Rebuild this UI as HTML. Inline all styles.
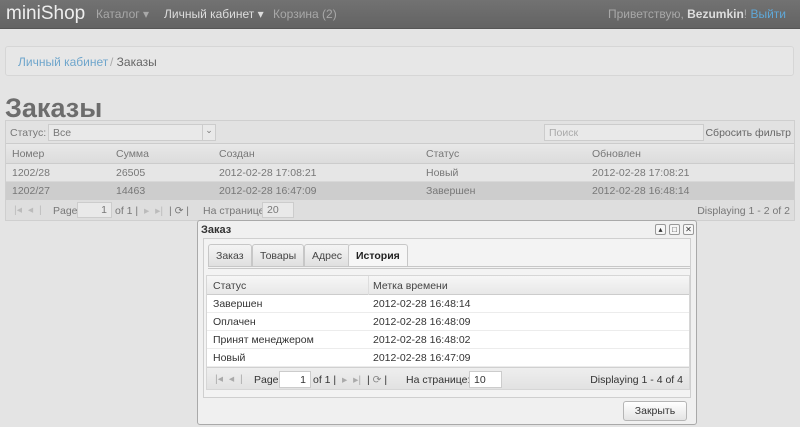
<!DOCTYPE html>
<html><head><meta charset="utf-8"><style>
*{box-sizing:border-box;margin:0;padding:0;white-space:nowrap}
body{width:800px;height:427px;overflow:hidden;background:#e4e4e4;font-family:"Liberation Sans",Arial,sans-serif;font-size:10.5px;color:#777;position:relative}
.a{position:absolute}
.nav{left:0;top:0;width:800px;height:29px;background:linear-gradient(#727272,#636363);border-bottom:1px solid #555}
.nav span{position:absolute;top:7px;font-size:12px;color:#a8a8a8}
.crumb{left:5px;top:46px;width:789px;height:30px;background:#e7e7e7;border:1px solid #d6d6d6;border-radius:3px}
.grid{left:5px;top:120px;width:790px;height:101px;border:1px solid #cfcfcf;background:#e2e2e2}
.hdr{background:linear-gradient(#e8e8e8,#dcdcdc);border-bottom:1px solid #ccc}
.cell{position:absolute;top:4px}
.pager{background:#dedede}
.inp{position:absolute;background:#e9e9e9;border:1px solid #ccc}
.win{left:197px;top:220px;width:500px;height:205px;background:#f0f0f0;border:1px solid #a9a9a9;border-radius:3px;color:#333}
.tab{position:absolute;top:23px;height:22px;border:1px solid #c7c7c7;border-bottom:none;border-radius:3px 3px 0 0;background:linear-gradient(#f4f4f4,#e0e0e0);padding:5px 7px;font-size:10.5px;color:#444}
.row{position:absolute;left:0;width:482px;height:18px;background:#fff;border-bottom:1px solid #ececec}
.row span{position:absolute;top:3px}
.btn{position:absolute;left:425px;top:180px;width:64px;height:20px;border:1px solid #b5b5b5;border-radius:3px;background:linear-gradient(#fff,#e4e4e4);text-align:center;padding-top:3px;font-size:10.5px}
.ib{position:absolute;top:3px;width:11px;height:11px;border:1px solid #999;border-radius:2px;background:#f6f6f6;font-size:8px;text-align:center;line-height:9px;color:#333}
</style></head><body>
<div class="a nav">
<span style="left:6px;top:3px;font-size:19px;color:#eee">miniShop</span>
<span style="left:96px">Каталог ▾</span>
<span style="left:164px;color:#ddd">Личный кабинет ▾</span>
<span style="left:273px">Корзина (2)</span>
<span style="right:14px">Приветствую, <b style="color:#ddd">Bezumkin</b>! <span style="position:static;color:#5fa8d8">Выйти</span></span>
</div>
<div class="a crumb"><span class="a" style="left:12px;top:8px;font-size:12px;color:#6fa6cc">Личный кабинет</span><span class="a" style="left:104px;top:8px;font-size:12px;color:#aaa">/ <span style="color:#666">Заказы</span></span></div>
<div class="a" style="left:5px;top:93px;font-size:27px;font-weight:bold;color:#6d6d6d">Заказы</div>
<div class="a grid">
 <div class="a" style="left:0;top:0;width:788px;height:23px;border-bottom:1px solid #ccc">
  <span class="a" style="left:4px;top:6px">Статус:</span>
  <div class="inp" style="left:42px;top:3px;width:168px;height:17px;padding:2px 4px">Все</div>
  <div class="inp" style="left:196px;top:3px;width:14px;height:17px;font-size:9px;text-align:center">⌄</div>
  <div class="inp" style="left:538px;top:3px;width:160px;height:17px;padding:2px 4px;color:#aaa">Поиск</div>
  <span class="a" style="right:3px;top:6px;color:#666">Сбросить фильтр</span>
 </div>
 <div class="a hdr" style="left:0;top:23px;width:788px;height:20px">
  <span class="cell" style="left:6px">Номер</span><span class="cell" style="left:110px">Сумма</span><span class="cell" style="left:213px">Создан</span><span class="cell" style="left:420px">Статус</span><span class="cell" style="left:586px">Обновлен</span>
 </div>
 <div class="a" style="left:0;top:43px;width:788px;height:18px;background:#e6e6e6;border-bottom:1px solid #d8d8d8">
  <span class="cell" style="left:6px;top:3px">1202/28</span><span class="cell" style="left:110px;top:3px">26505</span><span class="cell" style="left:213px;top:3px">2012-02-28 17:08:21</span><span class="cell" style="left:420px;top:3px">Новый</span><span class="cell" style="left:586px;top:3px">2012-02-28 17:08:21</span>
 </div>
 <div class="a" style="left:0;top:61px;width:788px;height:18px;background:#cdcdcd">
  <span class="cell" style="left:6px;top:3px">1202/27</span><span class="cell" style="left:110px;top:3px">14463</span><span class="cell" style="left:213px;top:3px">2012-02-28 16:47:09</span><span class="cell" style="left:420px;top:3px">Завершен</span><span class="cell" style="left:586px;top:3px">2012-02-28 16:48:14</span>
 </div>
 <div class="a pager" style="left:0;top:79px;width:788px;height:20px">
  <span class="a" style="left:8px;top:4px;color:#bbb">|◂ &nbsp;◂ &nbsp;|</span>
  <span class="a" style="left:47px;top:5px">Page</span>
  <div class="inp" style="left:71px;top:2px;width:35px;height:16px;text-align:right;padding:1px 4px">1</div>
  <span class="a" style="left:109px;top:5px">of 1 | &nbsp;<span style="color:#bbb">▸ &nbsp;▸|</span> &nbsp;| ⟳ |</span>
  <span class="a" style="left:197px;top:5px">На странице:</span>
  <div class="inp" style="left:256px;top:2px;width:32px;height:16px;padding:1px 4px">20</div>
  <span class="a" style="right:4px;top:5px">Displaying 1 - 2 of 2</span>
 </div>
</div>
<div class="a win">
 <span class="a" style="left:3px;top:3px;font-weight:bold;font-size:11px">Заказ</span>
 <div class="ib" style="left:457px">▴</div><div class="ib" style="left:471px">□</div><div class="ib" style="left:485px">✕</div>
 <div class="a" style="left:5px;top:17px;width:488px;height:160px;border:1px solid #cfcfcf;background:#f3f3f3"></div>
 <div class="tab" style="left:10px">Заказ</div>
 <div class="tab" style="left:54px">Товары</div>
 <div class="tab" style="left:106px">Адрес</div>
 <div class="tab" style="left:150px;background:#f6f6f6;font-weight:bold;color:#222;height:23px">История</div>
 <div class="a" style="left:10px;top:45px;width:482px;height:3px;border-top:1px solid #c7c7c7;border-bottom:1px solid #c7c7c7;background:#f3f3f3"></div>
 <div class="a" style="left:8px;top:54px;width:484px;height:115px;border:1px solid #d6d6d6;background:#fff">
  <div class="a hdr" style="left:0;top:0;width:482px;height:19px;background:linear-gradient(#f6f6f6,#e8e8e8)"><span class="cell" style="left:6px;color:#444">Статус</span><span class="cell" style="left:166px;color:#444">Метка времени</span><div class="a" style="left:161px;top:0;width:1px;height:19px;background:#ddd"></div></div>
  <div class="row" style="top:19px"><span style="left:6px">Завершен</span><span style="left:166px">2012-02-28 16:48:14</span></div>
  <div class="row" style="top:37px"><span style="left:6px">Оплачен</span><span style="left:166px">2012-02-28 16:48:09</span></div>
  <div class="row" style="top:55px"><span style="left:6px">Принят менеджером</span><span style="left:166px">2012-02-28 16:48:02</span></div>
  <div class="row" style="top:73px"><span style="left:6px">Новый</span><span style="left:166px">2012-02-28 16:47:09</span></div>
  <div class="a" style="left:0;top:91px;width:482px;height:22px;background:linear-gradient(#eee,#e2e2e2);border-top:1px solid #d0d0d0">
   <span class="a" style="left:8px;top:5px;color:#aaa">|◂ &nbsp;◂ &nbsp;|</span>
   <span class="a" style="left:47px;top:6px">Page</span>
   <div class="inp" style="left:72px;top:3px;width:32px;height:17px;text-align:right;padding:2px 4px;background:#fff">1</div>
   <span class="a" style="left:106px;top:6px">of 1 | &nbsp;<span style="color:#aaa">▸ &nbsp;▸|</span> &nbsp;| <span style="color:#888">⟳</span> |</span>
   <span class="a" style="left:199px;top:6px">На странице:</span>
   <div class="inp" style="left:262px;top:3px;width:33px;height:17px;padding:2px 4px;background:#fff">10</div>
   <span class="a" style="right:6px;top:6px">Displaying 1 - 4 of 4</span>
  </div>
 </div>
 <div class="btn">Закрыть</div>
</div>
</body></html>
